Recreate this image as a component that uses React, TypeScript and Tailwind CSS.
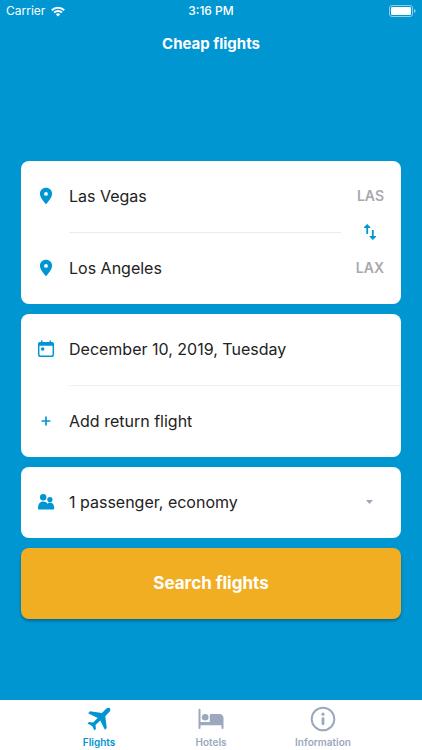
import { useState } from "react";
import type { ReactNode } from "react";

type TabName = "Flights" | "Hotels" | "Information";

const PinIcon = () => (
  <svg width="14" height="18" viewBox="0 0 14 18" fill="currentColor" aria-hidden="true">
    <path
      fillRule="evenodd"
      d="M7 .8C3.600.8.9 3.400.9 6.800c0 4.300 6.100 10.500 6.100 10.500s6.100-6.200 6.100-10.500C13.100 3.400 10.400.8 7 .8zm0 4.200a1.900 1.900 0 1 1 0 3.800 1.900 1.900 0 0 1 0-3.800z"
    />
  </svg>
);

const CalendarIcon = () => (
  <svg width="18" height="18" viewBox="0 0 18 18" fill="none" aria-hidden="true">
    <rect x="1.700" y="3" width="14.600" height="13.200" rx="1.800" stroke="currentColor" strokeWidth="1.500" />
    <path d="M1 5.800V4a1.900 1.900 0 0 1 1.900-1.900H4V.6h1.500v1.500h7V.6H14v1.500h1.100A1.900 1.900 0 0 1 17 4v1.800z" fill="currentColor" />
    <circle cx="5.700" cy="9" r="1.800" fill="currentColor" />
  </svg>
);

const PlusIcon = () => (
  <svg width="10" height="10" viewBox="0 0 10 10" aria-hidden="true">
    <path d="M5 .6v8.800M.6 5h8.800" stroke="currentColor" strokeWidth="1.700" />
  </svg>
);

const PeopleIcon = () => (
  <svg width="18" height="18" viewBox="0 0 18 18" fill="currentColor" aria-hidden="true">
    <circle cx="6.200" cy="4.200" r="3.200" />
    <circle cx="12.900" cy="6.500" r="2.600" />
    <path d="M1 15.200c0-4.200 2-6.700 5.200-6.700 2 0 3.400.9 4.300 2.300.7-.8 1.500-1.200 2.700-1.200 2.500 0 4 2.600 4 5.600 0 .9-.4 1.300-1.300 1.300H2.200c-.8 0-1.200-.5-1.200-1.300z" />
  </svg>
);

const SwapIcon = () => (
  <svg width="14" height="18" viewBox="0 0 14 18" fill="currentColor" aria-hidden="true">
    <path d="M4.200 1 7.400 4.200v.9H5.100V11H3.300V5.100H1v-.9zM9.800 17l3.200-3.200v-.9h-2.300V7H8.900v5.900H6.600v.9z" />
  </svg>
);

const PlaneIcon = () => (
  <svg width="26" height="26" viewBox="0 0 26 26" fill="currentColor" aria-hidden="true">
    <path d="M23.800 2.200c-1-.9-2.400-.5-3.400.4l-4.500 4.300L4 5.300 2.100 7.200l9.600 4.700-4.600 4.700-4.200-.5-1.400 1.400 4.600 2.400 2.400 4.600 1.400-1.400-.4-4.200 4.700-4.500 4.700 9.400 1.900-1.900-1.500-11.700 4.200-4.500c.9-1 1.200-2.600.3-3.500z" />
  </svg>
);

const BedIcon = () => (
  <svg width="26" height="26" viewBox="0 0 26 26" fill="currentColor" aria-hidden="true">
    <path d="M.5 3.700c0-.7.4-1 1-1s1 .3 1 1V16h9.300V8.900c0-.5.300-.8.800-.8h8.900c2.300 0 4 1.700 4 4v10c0 .6-.3.900-1 .9s-1-.3-1-.9v-2.800h-21v2.800c0 .6-.3.900-1 .9s-1-.3-1-.9z" />
    <circle cx="7.200" cy="11.200" r="3.300" />
  </svg>
);

const InfoIcon = () => (
  <svg width="26" height="26" viewBox="0 0 26 26" fill="none" aria-hidden="true">
    <circle cx="13" cy="13" r="11.300" stroke="currentColor" strokeWidth="2" />
    <circle cx="13" cy="8.200" r="1.600" fill="currentColor" />
    <path d="M13 12.600v5.200" stroke="currentColor" strokeWidth="2.800" strokeLinecap="round" />
  </svg>
);

const StatusBar = () => (
  <div className="flex h-5 items-center px-1.5 pt-0.5 text-[12px] text-white">
    <div className="flex flex-1 items-center gap-1.5">
      <span>Carrier</span>
      <svg width="14" height="11" viewBox="0 0 14 11" fill="none" stroke="currentColor" strokeWidth="2" aria-hidden="true">
        <path d="M.8 4.200a8.800 8.800 0 0 1 12.400 0M3.100 6.600a5.500 5.500 0 0 1 7.800 0" />
        <path d="M7 10.500 4.900 8.400a3 3 0 0 1 4.200 0z" fill="currentColor" stroke="none" />
      </svg>
    </div>
    <span className="font-medium">3:16 PM</span>
    <div className="flex flex-1 justify-end">
      <svg width="27" height="12" viewBox="0 0 27 12" fill="none" aria-hidden="true">
        <rect x=".5" y=".5" width="23" height="11" rx="2.500" stroke="currentColor" strokeOpacity=".55" />
        <rect x="2" y="2" width="20" height="8" rx="1.300" fill="currentColor" />
        <path d="M25 4c1 .3 1.500 1 1.500 2S26 7.700 25 8z" fill="currentColor" fillOpacity=".55" />
      </svg>
    </div>
  </div>
);

type RowProps = {
  icon: ReactNode;
  label: string;
  code?: string;
  onClick?: () => void;
};

const Row = ({ icon, label, code, onClick }: RowProps) => (
  <button type="button" onClick={onClick} className="flex h-[71px] w-full items-center pr-[17px] pb-0.5 text-left">
    <span className="flex w-12 justify-center pl-0.5 text-[#0096d2]">{icon}</span>
    <span className="flex-1">{label}</span>
    {code && <span className="text-[14px] font-semibold text-[#a9a9ab]">{code}</span>}
  </button>
);

const tabs: { name: TabName; icon: ReactNode }[] = [
  { name: "Flights", icon: <PlaneIcon /> },
  { name: "Hotels", icon: <BedIcon /> },
  { name: "Information", icon: <InfoIcon /> },
];

export default function App() {
  const [from, setFrom] = useState({ city: "Las Vegas", code: "LAS" });
  const [to, setTo] = useState({ city: "Los Angeles", code: "LAX" });
  const [passengers, setPassengers] = useState("1 passenger, economy");
  const [activeTab, setActiveTab] = useState<TabName>("Flights");

  const swapCities = () => {
    setFrom(to);
    setTo(from);
  };

  return (
    <div className="flex min-h-screen flex-col bg-[#0096d2] font-['Inter','Liberation_Sans',sans-serif] text-[#222222]">
      <header className="h-20">
        <StatusBar />
        <h1 className="pt-3 text-center text-[15px] leading-6 font-bold text-white">Cheap flights</h1>
      </header>

      <main className="flex flex-1 flex-col justify-center gap-2.5 px-[21px] text-[16px]">
        <section className="rounded-lg bg-white">
          <Row icon={<PinIcon />} label={from.city} code={from.code} />
          <div className="flex h-px items-center pl-12">
            <div className="h-px flex-1 bg-[#ebebeb]" />
            <button
              type="button"
              aria-label="Swap cities"
              onClick={swapCities}
              className="flex h-8 w-[60px] items-center justify-center pr-0.5 pb-0.5 text-[#0096d2]"
            >
              <SwapIcon />
            </button>
          </div>
          <Row icon={<PinIcon />} label={to.city} code={to.code} />
        </section>

        <section className="rounded-lg bg-white">
          <Row icon={<CalendarIcon />} label="December 10, 2019, Tuesday" />
          <div className="ml-12 h-px bg-[#f0f0f0]" />
          <Row icon={<PlusIcon />} label="Add return flight" />
        </section>

        <section className="flex h-[71px] items-center rounded-lg bg-white pb-0.5">
          <span className="flex w-12 justify-center pl-0.5 text-[#0096d2]">
            <PeopleIcon />
          </span>
          <div className="relative flex-1">
            <select
              aria-label="Passengers and class"
              value={passengers}
              onChange={(e) => setPassengers(e.target.value)}
              className="h-10 w-full appearance-none bg-transparent outline-none"
            >
              <option>1 passenger, economy</option>
              <option>2 passengers, economy</option>
              <option>1 passenger, business</option>
            </select>
            <svg
              className="pointer-events-none absolute top-1/2 right-7 -translate-y-1/2 text-[#9ba8bd]"
              width="7"
              height="4"
              viewBox="0 0 7 4"
              fill="currentColor"
              aria-hidden="true"
            >
              <path d="M0 0h7L3.500 4z" />
            </svg>
          </div>
        </section>

        <button
          type="button"
          className="h-[71px] rounded-lg bg-[#f2ae22] text-[17px] font-bold text-white shadow-[0_2px_3px_rgba(0,0,0,0.3)]"
        >
          Search flights
        </button>
      </main>

      <nav className="flex h-[50px] justify-center bg-white">
        {tabs.map((tab) => (
          <button
            key={tab.name}
            type="button"
            onClick={() => setActiveTab(tab.name)}
            className={`flex w-28 flex-col items-center pt-1.5 text-[10px] font-semibold ${
              activeTab === tab.name ? "text-[#0096d2]" : "text-[#9ba8bd]"
            }`}
          >
            {tab.icon}
            <span className="pt-1 leading-3">{tab.name}</span>
          </button>
        ))}
      </nav>
    </div>
  );
}
